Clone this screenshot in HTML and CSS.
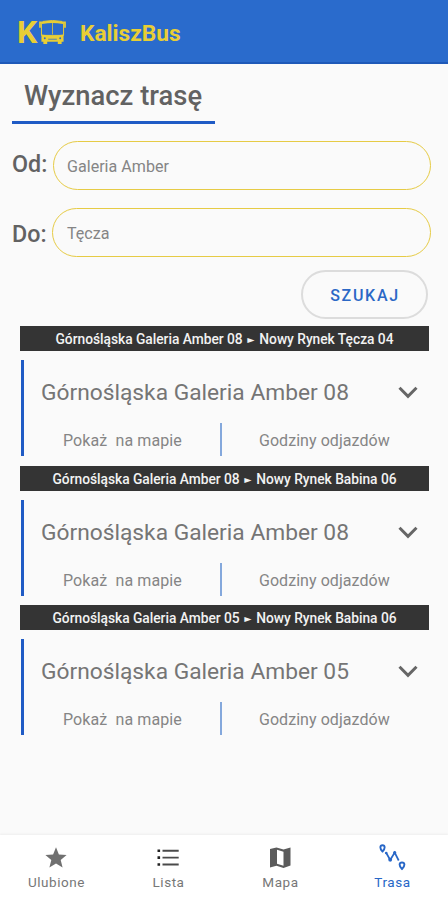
FILE: index.html
```html
<!DOCTYPE html>
<html lang="pl">
<head>
<meta charset="utf-8">
<title>KaliszBus</title>
<link rel="stylesheet" href="styles.css">
</head>
<body>
<header class="appbar">
  <span class="logo-k">K</span>
  <svg class="bus" width="27" height="25" viewBox="0 0 28 26">
    <path d="M4 1.500Q14-.500 24 1.500L25.500 3v13h-23V3z" fill="none" stroke="currentColor" stroke-width="1"/>
    <path d="M3 3Q14 1 25 3" fill="none" stroke="currentColor" stroke-width="2.400"/>
    <path d="M14 3v12" stroke="currentColor" stroke-width=".8"/>
    <path d="M3 2.500H1V8M25 2.500h2V8" fill="none" stroke="currentColor" stroke-width="1.800"/>
    <path d="M2.500 15Q14 17 25.500 15V22.500h-2V25h-4v-2.500h-11V25h-4v-2.500h-2z" fill="currentColor"/>
    <path d="M9.500 20h9" stroke="#2a6bcc" stroke-width=".8"/>
    <circle cx="6" cy="19" r="1" fill="#2a6bcc"/><circle cx="22" cy="19" r="1" fill="#2a6bcc"/>
  </svg>
  <span class="brand">KaliszBus</span>
</header>
<main>
  <h1><span>Wyznacz trasę</span></h1>
  <form class="search">
    <div class="field"><label>Od:</label><div class="input">Galeria Amber</div></div>
    <div class="field second"><label>Do:</label><div class="input">Tęcza</div></div>
    <button type="button"><span>SZUKAJ</span></button>
  </form>
  <section class="route">
    <div class="route-bar"><span>Górnośląska Galeria Amber 08 <b>►</b> Nowy Rynek Tęcza 04</span></div>
    <div class="card">
      <div class="stop"><span>Górnośląska Galeria Amber 08</span><svg width="20" height="13" viewBox="0 0 20 13"><path d="M1.500 1.800 10 10.300l8.500-8.500"/></svg></div>
      <div class="actions"><div><span class="show">Pokaż&nbsp; na mapie</span></div><i></i><div><span class="hours">Godziny odjazdów</span></div></div>
    </div>
  </section>
  <section class="route">
    <div class="route-bar"><span>Górnośląska Galeria Amber 08 <b>►</b> Nowy Rynek Babina 06</span></div>
    <div class="card">
      <div class="stop"><span>Górnośląska Galeria Amber 08</span><svg width="20" height="13" viewBox="0 0 20 13"><path d="M1.500 1.800 10 10.300l8.500-8.500"/></svg></div>
      <div class="actions"><div><span class="show">Pokaż&nbsp; na mapie</span></div><i></i><div><span class="hours">Godziny odjazdów</span></div></div>
    </div>
  </section>
  <section class="route">
    <div class="route-bar"><span>Górnośląska Galeria Amber 05 <b>►</b> Nowy Rynek Babina 06</span></div>
    <div class="card">
      <div class="stop"><span>Górnośląska Galeria Amber 05</span><svg width="20" height="13" viewBox="0 0 20 13"><path d="M1.500 1.800 10 10.300l8.500-8.500"/></svg></div>
      <div class="actions"><div><span class="show">Pokaż&nbsp; na mapie</span></div><i></i><div><span class="hours">Godziny odjazdów</span></div></div>
    </div>
  </section>
</main>
<nav>
  <a class="tab"><svg width="28" height="28" viewBox="0 0 28 28"><path d="m14 3.300 2.900 7.200 7.700.6-5.900 5 1.900 7.500-6.600-4.100-6.600 4.100 1.900-7.500-5.900-5 7.700-.6z" fill="#707070"/></svg><span>Ulubione</span></a>
  <a class="tab"><svg width="28" height="28" viewBox="0 0 28 28"><path d="M8.500 6.700h16.200M8.500 13.600h16.200M8.500 20.500h16.200" stroke="#4a4a4a" stroke-width="1.900"/><path d="M3.500 6.700h2.600M3.500 13.600h2.600M3.500 20.500h2.600" stroke="#222" stroke-width="2.600"/></svg><span>Lista</span></a>
  <a class="tab"><svg width="28" height="28" viewBox="0 0 28 28"><path fill-rule="evenodd" d="M4 5 10.500 3.500l7 2 7-2V21.500l-7 2.500-7-2.300L4 23.500zM11 5.800v13.900l6.500 2V7.700z" fill="#5b5b5b"/></svg><span>Mapa</span></a>
  <a class="tab active"><svg width="28" height="28" viewBox="0 0 28 28"><g fill="none" stroke="currentColor"><path d="M4.500 7.500C1.500 4.500 1.800 1.200 4.500 1.200s3 3.300 0 6.300zM24 25c-3.400-3.200-3-6.500 0-6.500s3.400 3.300 0 6.500z" stroke-width="1.900"/><path d="m8.300 9 3.900 7 4.500-7.500 4 8" stroke-width="1.700"/></g><g fill="currentColor"><circle cx="12.200" cy="15.700" r="1.900"/><circle cx="16.700" cy="8.700" r="1.600"/><circle cx="8.200" cy="9" r="1.300"/></g></svg><span>Trasa</span></a>
</nav>
</body>
</html>
```
FILE: styles.css
```css
* { box-sizing: border-box; }
body {
  margin: 0;
  width: 448px;
  height: 900px;
  display: flex;
  flex-direction: column;
  overflow: hidden;
  background: #fafafa;
  font-family: Roboto, "Liberation Sans", sans-serif;
  color: #757575;
}
.appbar {
  height: 64px;
  flex: none;
  display: flex;
  align-items: center;
  padding-left: 17px;
  background: #2a6bcc;
  border-bottom: 2px solid #1e59b8;
  color: #e8ce35;
}
.logo-k { width: 22px; font-size: 32px; font-weight: 700; line-height: 1; margin-top: 2px; }
.bus { margin-top: 3px; }
.brand { margin: 5px 0 0 14px; font-size: 22.700px; font-weight: 700; }
main { flex: 1; }
h1 {
  width: 203px;
  height: 60px;
  margin: 0 0 0 12px;
  padding: 16px 0 0 12px;
  border-bottom: 3px solid #1f5bc5;
  font-size: 27.400px;
  font-weight: 500;
  line-height: 32px;
  white-space: nowrap;
  color: #626262;
}
.search { display: flex; flex-direction: column; padding: 17px 17px 0 12px; }
.field { display: flex; height: 49px; }
.field.second { margin-top: 18px; }
label { width: 41px; padding-top: 9px; font-size: 23.300px; font-weight: 500; line-height: 28px; color: #626262; }
.second label { width: 40px; padding-top: 12px; }
.input {
  flex: 1;
  padding-left: 13px;
  border: 1.500px solid #e6cb45;
  border-radius: 25px;
  font-size: 16.100px;
  line-height: 50px;
  color: #858585;
}
.second .input { padding-left: 14px; }
button {
  align-self: flex-end;
  width: 127px;
  height: 49px;
  margin: 13px 3px 0 0;
  padding: 1px 0 0 1px;
  border: 2px solid #dcdcdc;
  border-radius: 25px;
  background: transparent;
  font: 500 16px Roboto, sans-serif;
  letter-spacing: 1.700px;
  color: #2b68c6;
}
.route { width: 409px; height: 139.600px; margin-left: 20px; }
.search + .route { margin-top: 7px; }
.route-bar {
  height: 25px;
  background: #343434;
  color: #f2f2f2;
  font-size: 13.800px;
  font-weight: 500;
  letter-spacing: -.030px;
  line-height: 26px;
  text-align: center;
  white-space: nowrap;
}
.route-bar b { display: inline-block; margin: 0 -1px; font-size: 12px; font-weight: 400; line-height: 12px; vertical-align: 0; transform: scaleY(.7); }
.card { height: 96px; margin: 9px 0 0 1px; padding-left: 17px; border-left: 3px solid #1f5bc5; }
.stop {
  height: 63px;
  display: flex;
  align-items: center;
  justify-content: space-between;
  padding: 2px 11px 0 0;
  font-size: 22.750px;
  white-space: nowrap;
}
.stop svg { fill: none; stroke: #666; stroke-width: 3; }
.actions { display: flex; height: 33px; line-height: 35px; font-size: 16px; color: #858585; }
.actions div { width: 179px; padding-left: 22px; white-space: nowrap; }
.show { letter-spacing: .1px; }
.actions i { width: 2px; background: #84a8dc; }
.actions i + div { padding-left: 37px; }
.hours { letter-spacing: .050px; }
nav {
  flex: none;
  height: 65px;
  display: flex;
  background: #fff;
  box-shadow: 0 -1px 2px #eeeeee;
}
.tab {
  width: 112px;
  display: flex;
  flex-direction: column;
  align-items: center;
  padding-top: 9px;
  font-size: 13.500px;
  letter-spacing: .550px;
  line-height: 22px;
  color: #777;
}
.tab span { margin-top: -1px; padding-left: 1px; }
.active { color: #2867c7; }
```
